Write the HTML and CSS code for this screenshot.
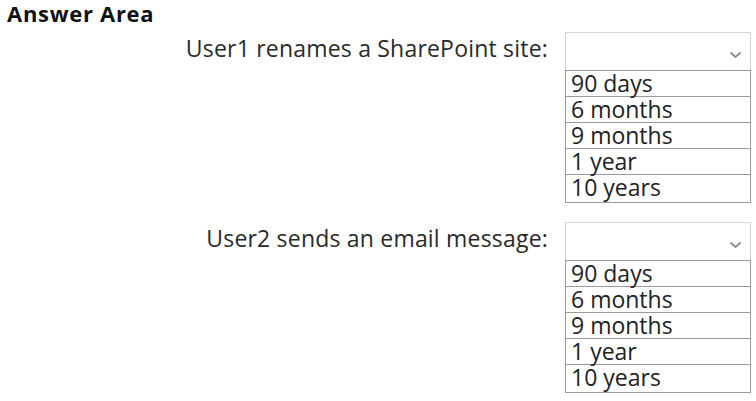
FILE: index.html
```html
<!DOCTYPE html>
<html lang="en">
<head>
    <meta charset="UTF-8">
    <meta name="viewport" content="width=device-width, initial-scale=1.0">
    <title>Answer Area</title>
    <link rel="stylesheet" href="styles.css">
</head>
<body>
    <div class="answer-area">
        <h1>Answer Area</h1>

        <div class="question">
            <div class="label">User1 renames a SharePoint site:</div>
            <div class="field">
                <div class="select">
                    <svg class="chevron" width="13" height="8" viewBox="0 0 13 8">
                        <path d="M1.5 1.5 L6.5 6 L11.5 1.5" fill="none" stroke="#8a8a8a" stroke-width="1.8"/>
                    </svg>
                </div>
                <ul class="options">
                    <li>90 days</li>
                    <li>6 months</li>
                    <li>9 months</li>
                    <li>1 year</li>
                    <li>10 years</li>
                </ul>
            </div>
        </div>

        <div class="question">
            <div class="label">User2 sends an email message:</div>
            <div class="field">
                <div class="select">
                    <svg class="chevron" width="13" height="8" viewBox="0 0 13 8">
                        <path d="M1.5 1.5 L6.5 6 L11.5 1.5" fill="none" stroke="#8a8a8a" stroke-width="1.8"/>
                    </svg>
                </div>
                <ul class="options">
                    <li>90 days</li>
                    <li>6 months</li>
                    <li>9 months</li>
                    <li>1 year</li>
                    <li>10 years</li>
                </ul>
            </div>
        </div>
    </div>
</body>
</html>
```

FILE: styles.css
```css
body {
    margin: 0;
    padding: 0;
    background-color: #fff;
    font-family: "Open Sans", "Noto Sans", Arial, sans-serif;
    color: #222;
}
.answer-area {
    padding: 0 5px 0 7px;
}
h1 {
    margin: 0;
    font-size: 22px;
    font-weight: 700;
    line-height: 26px;
    letter-spacing: 0.7px;
    color: #111;
}
.question {
    display: grid;
    grid-template-columns: 1fr 186px;
    column-gap: 17px;
    margin-top: 6px;
}
.question + .question {
    margin-top: 19px;
}
.label {
    text-align: right;
    font-size: 23px;
    line-height: 32px;
    letter-spacing: 0.2px;
    color: #2a2a2a;
}
.select {
    height: 37px;
    border: 1px solid #d4d4d4;
    border-bottom: none;
    display: flex;
    align-items: center;
    justify-content: flex-end;
    padding-right: 8px;
}
.chevron {
    margin-top: 6px;
}
.options {
    list-style: none;
    margin: 0;
    padding: 0;
    border: 1px solid #9a9a9a;
}
.options li {
    height: 25px;
    line-height: 25px;
    padding-left: 5px;
    font-size: 23px;
    border-bottom: 1px solid #9a9a9a;
}
.options li:last-child {
    border-bottom: none;
    height: 27px;
}
```
